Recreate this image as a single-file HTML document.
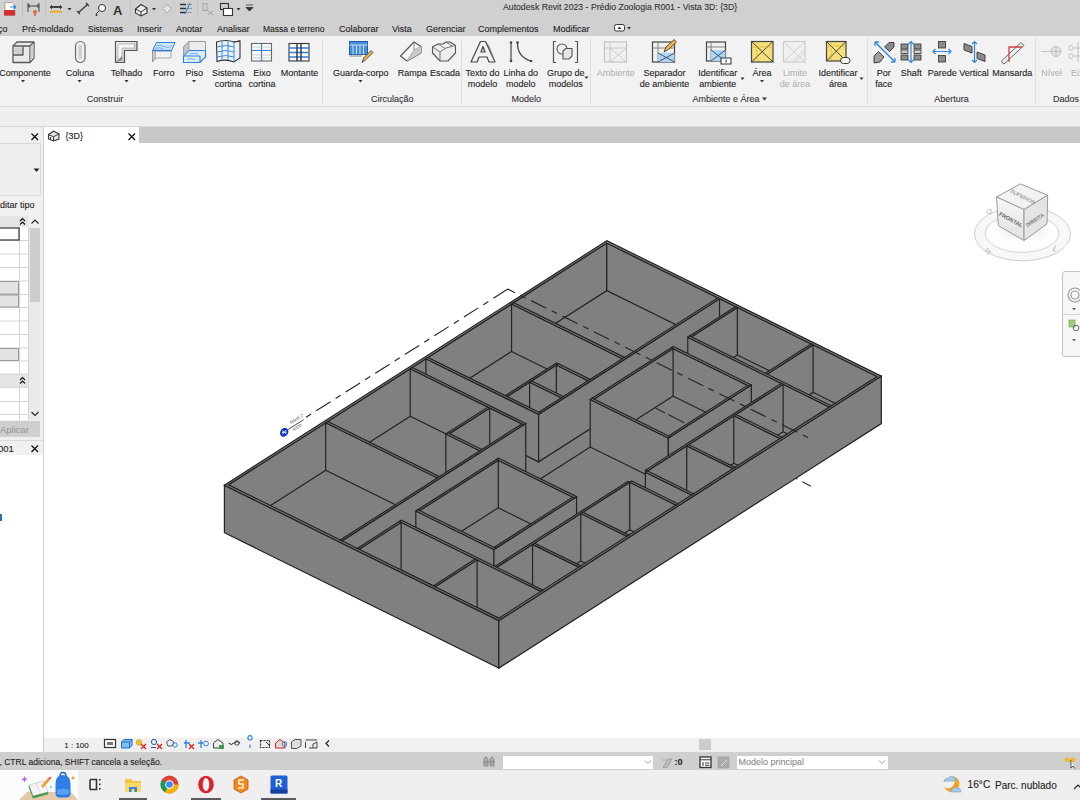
<!DOCTYPE html>
<html><head><meta charset="utf-8">
<style>
*{margin:0;padding:0;box-sizing:border-box}
html,body{width:1080px;height:800px;overflow:hidden;background:#fff;font-family:"Liberation Sans",sans-serif;color:#222}
.t,.l{-webkit-text-stroke:0.1px currentColor}
.a{position:absolute}
.t{position:absolute;white-space:nowrap;font-size:9px;line-height:11px;color:#222}
.c{text-align:center;transform:translateX(-50%)}
.l{position:absolute;white-space:nowrap;font-size:9px;line-height:11px;color:#222;text-align:center;transform:translateX(-50%)}
.dis{color:#b4b4b4}
svg{position:absolute;overflow:visible}
</style></head><body>
<!-- title bar -->
<div class="a" style="left:0;top:0;width:1080px;height:36px;background:#d0d0d0"></div>
<svg class="a" style="left:0;top:0" width="270" height="20">
<path d="M5,2.5 H12 L15,5.5 V15.5 H5 Z" fill="#fff" stroke="#999" stroke-width=".8"/>
<rect x="4" y="10" width="11" height="5.5" fill="#d32f2f"/>
<path d="M10,7 H15.5 M13.5,5 L15.5,7 L13.5,9" stroke="#2f86e0" stroke-width="1.2" fill="none"/>
<path d="M22.5,1 V18" stroke="#c2c2c2"/>
<path d="M28,3 V12 M39,3 V12 M28,6 H39 M30,4.5 L28,6 L30,7.5 M37,4.5 L39,6 L37,7.5" stroke="#444" stroke-width="1" fill="none"/>
<circle cx="35" cy="12" r="2" fill="#e2643a"/><path d="M35,14 V16" stroke="#e2643a" stroke-width="1.5"/>
<path d="M45.5,1 V18" stroke="#c2c2c2"/>
<rect x="50" y="6" width="12" height="2" fill="#444"/><path d="M50,7 L52,5 M50,7 L52,9 M62,7 L60,5 M62,7 L60,9" stroke="#444"/>
<rect x="50" y="10.5" width="12" height="2.5" fill="#e3b23c"/>
<path d="M67.5,8 h4 l-2,2.5z" fill="#333"/>
<path d="M78,13 L88,4 M77,11 L80,14 M86,3 L89,6" stroke="#333" stroke-width="1.2" fill="none"/>
<circle cx="102" cy="8" r="3.5" fill="#fff" stroke="#333" stroke-width="1"/>
<path d="M99,11 L96.5,13.5 V15" stroke="#333" stroke-width="1" fill="none"/><circle cx="96.5" cy="15" r="1" fill="#333"/>
<text x="113" y="15" font-family="Liberation Sans" font-weight="bold" font-size="13" fill="#333">A</text>
<path d="M130.5,1 V18" stroke="#c2c2c2"/>
<path d="M135.5,9 L141,4.5 L147,8 V13 L141,16 L135.5,13 Z" fill="#eee" stroke="#333" stroke-width="1.1"/>
<path d="M135.5,9 L141,12 L147,8 M141,12 V16" stroke="#333" stroke-width="1" fill="none"/>
<path d="M152,8 h4 l-2,2.5z" fill="#333"/>
<path d="M163,8.5 L167,4.5 L171.5,8.5 L167,13 Z" fill="#e5e5e5" stroke="#aaa" stroke-width="1"/>
<path d="M180,4.5 H186 M180,8.5 H186 M180,12.5 H186" stroke="#333" stroke-width="1.5"/>
<path d="M186.5,4.5 H192 M186.5,8.5 H192 M186.5,12.5 H192" stroke="#999" stroke-width="1"/>
<path d="M190,3 L185,14" stroke="#2f86e0" stroke-width="1.1"/>
<path d="M197.5,1 V18" stroke="#c2c2c2"/>
<g opacity=".35" stroke="#555" fill="none"><rect x="203" y="3.5" width="4" height="7"/><path d="M208,11 L213,15 M213,11 L208,15"/></g>
<rect x="220.5" y="3.5" width="8" height="6" fill="none" stroke="#333" stroke-width="1.1"/>
<rect x="223.5" y="8.5" width="9" height="7" fill="#fff" stroke="#333" stroke-width="1.1"/>
<path d="M236.5,8 h4 l-2,2.5z" fill="#333"/>
<path d="M246,5 H253 M246,7.5 h7 l-3.5,3.5z" fill="#333" stroke="#333" stroke-width=".8"/>
</svg>
<div class="t" style="left:503px;top:2px;font-size:8.7px;color:#333">Autodesk Revit 2023 - Prédio Zoologia R001 - Vista 3D: {3D}</div>
<svg class="a" style="left:612px;top:23px" width="22" height="10"><rect x="2.5" y="1.5" width="10" height="6.5" rx="2" fill="#fff" stroke="#333" stroke-width="1"/><path d="M5.5,6 L7.5,3.5 L9.5,6 Z" fill="#333"/><path d="M15,4 h4 l-2,2.5z" fill="#333"/></svg>

<!-- tabs -->
<div class="t" style="left:-2px;top:24px">ço</div>
<div class="t" style="left:22px;top:24px">Pré-moldado</div>
<div class="t" style="left:88px;top:24px;font-size:8.5px">Sistemas</div>
<div class="t" style="left:137px;top:24px">Inserir</div>
<div class="t" style="left:176px;top:24px">Anotar</div>
<div class="t" style="left:217px;top:24px">Analisar</div>
<div class="t" style="left:263px;top:24px;font-size:8.5px">Massa e terreno</div>
<div class="t" style="left:339px;top:24px">Colaborar</div>
<div class="t" style="left:392px;top:24px">Vista</div>
<div class="t" style="left:426px;top:24px">Gerenciar</div>
<div class="t" style="left:478px;top:24px">Complementos</div>
<div class="t" style="left:553px;top:24px">Modificar</div>
<!-- ribbon -->
<div class="a" style="left:0;top:36px;width:1080px;height:71px;background:#f2f2f2;border-bottom:1px solid #dcdcdc"></div>
<div class="a" style="left:322px;top:38px;width:1px;height:66px;background:#dedede"></div>
<div class="a" style="left:461px;top:38px;width:1px;height:66px;background:#dedede"></div>
<div class="a" style="left:590px;top:38px;width:1px;height:66px;background:#dedede"></div>
<div class="a" style="left:867px;top:38px;width:1px;height:66px;background:#dedede"></div>
<div class="a" style="left:1035px;top:38px;width:1px;height:66px;background:#dedede"></div>
<div class="l" style="left:25px;top:67.5px">Componente</div>
<div class="l" style="left:80px;top:67.5px">Coluna</div>
<div class="l" style="left:126.6px;top:67.5px">Telhado</div>
<div class="l" style="left:163.7px;top:67.5px">Forro</div>
<div class="l" style="left:194.2px;top:67.5px">Piso</div>
<div class="l" style="left:228.2px;top:67.5px">Sistema<br>cortina</div>
<div class="l" style="left:262px;top:67.5px">Eixo<br>cortina</div>
<div class="l" style="left:299.5px;top:67.5px">Montante</div>
<div class="l" style="left:360.8px;top:67.5px">Guarda-corpo</div>
<div class="l" style="left:412.2px;top:67.5px">Rampa</div>
<div class="l" style="left:445px;top:67.5px">Escada</div>
<div class="l" style="left:482.5px;top:67.5px">Texto do<br>modelo</div>
<div class="l" style="left:520.8px;top:67.5px">Linha do<br>modelo</div>
<div class="l" style="left:565.8px;top:67.5px">Grupo de<br>modelos</div>
<div class="l dis" style="left:615.8px;top:67.5px">Ambiente</div>
<div class="l" style="left:664.5px;top:67.5px">Separador<br>de ambiente</div>
<div class="l" style="left:717.7px;top:67.5px">Identificar<br>ambiente</div>
<div class="l" style="left:762px;top:67.5px">Área</div>
<div class="l dis" style="left:795px;top:67.5px">Limite<br>de área</div>
<div class="l" style="left:838px;top:67.5px">Identificar<br>área</div>
<div class="l" style="left:883.7px;top:67.5px">Por<br>face</div>
<div class="l" style="left:911.2px;top:67.5px">Shaft</div>
<div class="l" style="left:942.2px;top:67.5px">Parede</div>
<div class="l" style="left:974px;top:67.5px">Vertical</div>
<div class="l" style="left:1012.2px;top:67.5px">Mansarda</div>
<div class="l dis" style="left:1051.5px;top:67.5px">Nível</div>
<div class="t dis" style="left:1071px;top:67.5px">Eixo</div>
<div class="l" style="left:105px;top:93.5px;color:#333">Construir</div>
<div class="l" style="left:392.2px;top:93.5px;color:#333">Circulação</div>
<div class="l" style="left:526.3px;top:93.5px;color:#333">Modelo</div>
<div class="l" style="left:726px;top:93.5px;color:#333">Ambiente e Área</div>
<div class="l" style="left:951.5px;top:93.5px;color:#333">Abertura</div>
<div class="t" style="left:1053px;top:93.5px;color:#333">Dados</div>
<svg class="a" style="left:0;top:0" width="1080" height="110">
<g fill="#333">
<path d="M21,80h4l-2,2.5z"/><path d="M77.5,80h4l-2,2.5z"/><path d="M124.5,80h4l-2,2.5z"/><path d="M192,80h4l-2,2.5z"/>
<path d="M358.5,80h4l-2,2.5z"/><path d="M584.5,76.5h4l-2,2.5z"/><path d="M740.5,77.5h4l-2,2.5z"/><path d="M760,80h4l-2,2.5z"/>
<path d="M859.5,77.5h4l-2,2.5z"/><path d="M762,97.5h5l-2.5,3z"/><path d="M0,80h0z"/>
</g>
</svg>

<svg class="a" style="left:0;top:0" width="1080" height="70">
<defs>
<linearGradient id="gg" x1="0" y1="0" x2="1" y2="1"><stop offset="0" stop-color="#f4f4f4"/><stop offset="1" stop-color="#bdbdbd"/></linearGradient>
<linearGradient id="gb" x1="0" y1="0" x2="1" y2="0"><stop offset="0" stop-color="#3d8ee6"/><stop offset=".5" stop-color="#bfe0ff"/><stop offset="1" stop-color="#3d8ee6"/></linearGradient>
</defs>
<!-- Componente -->
<g stroke="#5a5a5a" stroke-width="1.3" stroke-linejoin="round">
<path d="M13,46 L17,42 H34 V58 L30,62.5 H13 Z" fill="#e9e9e9"/>
<path d="M30,62.5 V46 H13 M30,46 L34,42" fill="none"/>
<path d="M14.5,47.5 H23 V54 H14.5 Z" fill="#cfcfcf" stroke="none"/>
<path d="M23,46 V55 H13" fill="none"/>
<path d="M30.5,47 L33.5,43.5 V57.5 L30.5,61" fill="#cfcfcf" stroke="none"/>
</g>
<!-- Coluna -->
<rect x="75.5" y="41.5" width="9.5" height="21" rx="4.7" fill="#f0f0f0" stroke="#6a6a6a" stroke-width="1.2"/>
<rect x="78.5" y="45" width="3.5" height="14" fill="#d0d0d0"/>
<!-- Telhado -->
<path d="M115.5,41.5 H137 V50.5 H124.5 V62.5 H115.5 Z" fill="url(#gg)" stroke="#555" stroke-width="1.2"/>
<path d="M118,44 H134.5 V48 H122 V60 H118 Z" fill="#f7f7f7" stroke="#999" stroke-width=".6"/>
<path d="M115.5,62.5 L122,56 V60 Z" fill="#888"/>
<!-- Forro -->
<path d="M152.5,50.5 V62 L156,58 V51" fill="#c8c8c8" stroke="#888" stroke-width=".8"/>
<path d="M156,51 H171 V58 H156" fill="#f2f2f2" stroke="#999" stroke-width=".8"/>
<path d="M152.5,50.5 L156.5,42.5 H175 L171.5,50.5 Z" fill="#cfe6fb" stroke="#2f7fd8" stroke-width="1"/>
<path d="M156,46 Q160,44 164,46.5 T172,45.5 M155,48.5 Q159,47 163,48.5" stroke="#6fb0ef" stroke-width="1" fill="none"/>
<path d="M152.5,50.5 H171.5" stroke="#2f7fd8" stroke-width="1.4"/>
<!-- Piso -->
<path d="M183.5,47 L189,41.5 H205.5 V55 L200,60 H183.5 Z" fill="#ececec" stroke="#999" stroke-width="1"/>
<path d="M183.5,47 V56 L189,50.5 V41.5 Z" fill="#c4c4c4" stroke="#999" stroke-width=".8"/>
<path d="M183.5,56 L189,50.5 H205.5 L200,56 Z" fill="#cfe6fb" stroke="#2f7fd8" stroke-width="1"/>
<path d="M183.5,56 V62.5 H200 L205.5,57 V50.5 M200,56 V62.5 M183.5,56 H200" fill="#dbeefc" stroke="#2f7fd8" stroke-width="1.1"/>
<path d="M187,59.5 Q191,57.5 195,59.5 M190,54 Q194,52.5 198,54" stroke="#6fb0ef" stroke-width="1" fill="none"/>
<!-- Sistema cortina -->
<path d="M216.5,42 Q226,39 234,42 L240,41 V58 L234,62 Q226,58.5 217,61.5 Z" fill="#eaf3fd" stroke="#333" stroke-width="1.1"/>
<path d="M234,42 V62 M222,41 V60.5 M228,40.5 V60 M216.8,47 Q226,44 234,47 M217,52 Q226,49 234,52 M217,57 Q226,54 234,57" fill="none" stroke="#2f7fd8" stroke-width=".9"/>
<path d="M234,42 L240,41" stroke="#333" fill="none"/>
<!-- Eixo cortina -->
<rect x="251.5" y="43.5" width="20" height="17.5" fill="#fafafa" stroke="#666" stroke-width="1.1"/>
<path d="M261.5,43.5 V61 M251.5,50.5 H271.5" stroke="#2f7fd8" stroke-width="1.2"/>
<path d="M251.5,47 H271.5 M251.5,55 H271.5 M251.5,58 H271.5" stroke="#bbb" stroke-width=".7"/>
<!-- Montante -->
<rect x="289" y="43.5" width="20" height="17.5" fill="#fafafa" stroke="#3a3a3a" stroke-width="1.1"/>
<path d="M289,48 H309 M289,52.5 H309 M289,57 H309" stroke="#2f7fd8" stroke-width="1.3"/>
<path d="M297,43.5 V61 M301,43.5 V61" stroke="#333" stroke-width="1.4"/>
<!-- Guarda-corpo -->
<rect x="349.5" y="41.5" width="18" height="13" fill="#4a90d9" stroke="#1d5fb0" stroke-width="1"/>
<path d="M349.5,45 H367.5 M353,45 V54.5 M356.5,45 V54.5 M360,45 V54.5 M363.5,45 V54.5" stroke="#cfe5fb" stroke-width=".9"/>
<path d="M349.5,56 H362" stroke="#888" stroke-width="1"/>
<path d="M362,62.5 L364,57.5 L371,50.5 L373,52.5 L366,59.5 Z" fill="#f3b340" stroke="#444" stroke-width=".9"/>
<!-- Rampa -->
<path d="M400.5,56 L414,42 L421,46.5 V53 L407,61 Z" fill="#f7f7f7" stroke="#555" stroke-width="1.1" stroke-linejoin="round"/>
<path d="M407,61 L414,50 L421,46.5 M414,42 V50" fill="none" stroke="#777" stroke-width=".8"/>
<path d="M414,50 L421,46.5 V53 L407,61 Z" fill="#c9c9c9"/>
<!-- Escada -->
<path d="M432.5,53 V47 L438,44 H443 L446,42 H450 L455.5,45.5 V53 L448,61 H440 Z" fill="#eee" stroke="#555" stroke-width="1.1" stroke-linejoin="round"/>
<path d="M432.5,47 L440,52 V61 M440,52 L446,48 M438,44 L445,48.5 M446,42 L452,46 M446,48 L455.5,45.5" fill="none" stroke="#666" stroke-width=".9"/>
<!-- Texto do modelo -->
<path d="M471,62 L480.5,41.5 H485.5 L495,62 H489 L487,57 H479 L477,62 Z M481,52 H485 L483,46.5 Z" fill="#f2f2f2" stroke="#444" stroke-width="1.2" stroke-linejoin="round" fill-rule="evenodd"/>
<path d="M485.5,41.5 L489,46 L495,62" fill="none" stroke="#777" stroke-width=".8"/>
<!-- Linha do modelo -->
<path d="M511,42 V61" stroke="#444" stroke-width="1.2"/>
<circle cx="511" cy="42.5" r="1.3" fill="#444"/><circle cx="511" cy="61" r="1.3" fill="#444"/>
<path d="M517.5,42 Q517,57 531,61" fill="none" stroke="#444" stroke-width="1.2"/>
<circle cx="517.5" cy="42.5" r="1.3" fill="#444"/><circle cx="531" cy="61" r="1.3" fill="#444"/>
<!-- Grupo de modelos -->
<path d="M556,41.5 H553.5 V62.5 H556 M575,41.5 H577.5 V62.5 H575" fill="none" stroke="#555" stroke-width="1.2"/>
<circle cx="562" cy="49" r="5" fill="#f0f0f0" stroke="#555" stroke-width="1.1"/>
<path d="M563,51 L566,48.5 H572 V56 L569,59 H563 Z" fill="#e6e6e6" stroke="#555" stroke-width="1.1"/>
<!-- Ambiente disabled -->
<g opacity=".35">
<rect x="604.5" y="42" width="22" height="20" fill="#eee" stroke="#666" stroke-width="1.1"/>
<path d="M610,42 V62 M604.5,48 H626.5 M610,48 L626.5,62 M626.5,48 L610,62" stroke="#777" fill="none" stroke-width=".9"/>
</g>
<!-- Separador -->
<rect x="652.5" y="42" width="22" height="20" fill="#f0f0f0" stroke="#444" stroke-width="1.2"/>
<path d="M658,42 V62 M652.5,48 H674.5" stroke="#777" stroke-width=".9"/>
<path d="M658,53 H674.5 V62 H658 Z" fill="#a9d6f5"/>
<path d="M658,53 L674.5,62 M674.5,53 L658,62" stroke="#445" stroke-width=".9"/>
<path d="M664,52 L666,47 L674,39.5 L676.5,42 L668.5,49.5 Z" fill="#f3b340" stroke="#444" stroke-width=".9"/>
<!-- Identificar ambiente -->
<rect x="706.5" y="42" width="19" height="19" fill="#f0f0f0" stroke="#444" stroke-width="1.2"/>
<path d="M711,42 V61 M706.5,47 H725.5" stroke="#777" stroke-width=".9"/>
<path d="M711,50 H725.5 V61 H711 Z" fill="#a9d6f5"/>
<path d="M711,50 L725.5,61 M725.5,50 L711,61" stroke="#445" stroke-width=".9"/>
<rect x="721" y="58" width="10" height="6" fill="#fff" stroke="#333" stroke-width="1"/>
<path d="M726,59.5 V62.5" stroke="#333" stroke-width="1"/>
<!-- Area -->
<rect x="751.5" y="41.5" width="21.5" height="20.5" fill="#f7e07a" stroke="#444" stroke-width="1.2"/>
<path d="M751.5,41.5 L773,62 M773,41.5 L751.5,62" stroke="#444" stroke-width="1"/>
<path d="M757,41.5 V62 M751.5,47 H773" stroke="#c9a928" stroke-width=".6"/>
<!-- Limite disabled -->
<g opacity=".3">
<rect x="783.5" y="41.5" width="21.5" height="20.5" fill="#eee" stroke="#777" stroke-width="1.1"/>
<path d="M783.5,41.5 L805,62 M805,41.5 L783.5,62 M792,62 L805,49 M795,62 L805,52" stroke="#777" stroke-width=".9"/>
</g>
<!-- Identificar area -->
<rect x="826.5" y="41.5" width="19.5" height="19.5" fill="#f7e07a" stroke="#444" stroke-width="1.2"/>
<path d="M826.5,41.5 L846,61 M846,41.5 L826.5,61" stroke="#444" stroke-width="1"/>
<path d="M831,41.5 V61 M826.5,46 H846" stroke="#c9a928" stroke-width=".6"/>
<rect x="840.5" y="57.5" width="9.5" height="6" rx="3" fill="#fff" stroke="#333" stroke-width="1"/>
<!-- Por face -->
<path d="M876,43 L894,61" stroke="#2f86e0" stroke-width="1.4"/>
<path d="M875,42 V46 M875,42 H879 M895,62 V58 M895,62 H891" stroke="#2f86e0" stroke-width="1.3" fill="none"/>
<path d="M884.5,47 L889,42.5 H894 V47 L889.5,51.5 Z" fill="#8a8a8a" stroke="#333" stroke-width=".9"/>
<path d="M874,63 V56 L878.5,51.5 L884,57 L880,62 Z" fill="#a0a0a0" stroke="#333" stroke-width=".9"/>
<!-- Shaft -->
<g fill="#8c8c8c" stroke="#333" stroke-width=".8">
<rect x="901" y="44" width="7" height="5"/><rect x="914" y="44" width="7" height="5"/>
<rect x="901" y="55" width="7" height="5"/><rect x="914" y="55" width="7" height="5"/>
<rect x="901" y="50" width="7" height="3.5" fill="#ccc"/><rect x="914" y="50" width="7" height="3.5" fill="#ccc"/>
</g>
<path d="M911,41.5 V62.5 M908.5,44 L911,41.5 L913.5,44 M908.5,60 L911,62.5 L913.5,60" stroke="#2f86e0" stroke-width="1.2" fill="none"/>
<!-- Parede -->
<rect x="938.5" y="41.5" width="7" height="6.5" fill="#8c8c8c" stroke="#333" stroke-width=".8"/>
<rect x="938.5" y="55.5" width="7" height="6.5" fill="#8c8c8c" stroke="#333" stroke-width=".8"/>
<path d="M933,51.5 H951 M935.5,49 L933,51.5 L935.5,54 M948.5,49 L951,51.5 L948.5,54" stroke="#2f86e0" stroke-width="1.2" fill="none"/>
<!-- Vertical -->
<path d="M964,43.5 L972,46.5 V53 L964,50 Z" fill="#8c8c8c" stroke="#333" stroke-width=".9"/>
<path d="M977,52 L985,55 V61.5 L977,58.5 Z" fill="#8c8c8c" stroke="#333" stroke-width=".9"/>
<path d="M974.5,41.5 V62.5 M972,44 L974.5,41.5 L977,44 M972,60 L974.5,62.5 L977,60" stroke="#2f86e0" stroke-width="1.2" fill="none"/>
<!-- Mansarda -->
<path d="M1001,61.5 L1021,42.5 L1024,45.5 L1004,64 Z" fill="#eee" stroke="#555" stroke-width=".9"/>
<path d="M1009,62 V47 H1022" fill="none" stroke="#d43c3c" stroke-width="1.3"/>
<!-- Nivel disabled -->
<g opacity=".35" stroke="#666" fill="none">
<path d="M1041,51.5 H1050"/><circle cx="1056" cy="51.5" r="5" fill="#ccc"/>
<path d="M1051,51.5 H1061 M1056,46.5 V56.5"/>
<circle cx="1071" cy="48" r="2.3"/><circle cx="1071" cy="56" r="2.3"/><path d="M1073,48 H1080 M1073,56 H1080 M1078,42 V62"/>
</g>
</svg>

<!-- options bar -->
<div class="a" style="left:0;top:107px;width:1080px;height:20px;background:#efefef"></div>
<!-- view tab row -->
<div class="a" style="left:0;top:127px;width:1080px;height:16px;background:#c8c8c8"></div>
<!-- drawing area -->
<div class="a" style="left:44px;top:143px;width:1036px;height:595px;background:#fff"></div>
<!-- options bar border -->
<div class="a" style="left:0;top:126px;width:1080px;height:1px;background:#d6d6d6"></div>
<!-- view tab -->
<div class="a" style="left:44px;top:127px;width:95px;height:16px;background:#fff"></div>
<svg class="a" style="left:47px;top:130px" width="14" height="12">
<path d="M1.5,4.5 L6.5,1.2 L12,3.8 V9 L6.5,11 L1.5,9 Z" fill="#e8e8e8" stroke="#333" stroke-width="1.1"/>
<path d="M1.5,4.5 L6.5,6.8 L12,3.8 M6.5,6.8 V11 M3.5,7 V9.5" stroke="#333" stroke-width="1" fill="none"/>
</svg>
<div class="t" style="left:65.5px;top:130.5px;color:#222">{3D}</div>
<svg class="a" style="left:127px;top:132px" width="10" height="10"><path d="M1.5,1.5 L8,8 M8,1.5 L1.5,8" stroke="#111" stroke-width="1.3"/></svg>
<!-- left panel -->
<div class="a" style="left:0;top:127px;width:43px;height:328px;background:#f0f0f0"></div>
<svg class="a" style="left:30px;top:132px" width="10" height="10"><path d="M1.5,1.5 L8,8 M8,1.5 L1.5,8" stroke="#111" stroke-width="1.3"/></svg>
<div class="a" style="left:-1px;top:143px;width:42px;height:53px;background:#efefef;border:1px solid #d9d9d9"></div>
<svg class="a" style="left:33px;top:168px" width="8" height="5"><path d="M0.5,0.5 h6 l-3,3.5z" fill="#222"/></svg>
<div class="t" style="left:0px;top:200px;color:#222">ditar tipo</div>
<div class="a" style="left:0;top:215.5px;width:28px;height:11.5px;background:#e4e4e4"></div>
<div class="a" style="left:0;top:374px;width:28px;height:13px;background:#e4e4e4"></div>
<svg class="a" style="left:19px;top:217px" width="8" height="9"><path d="M1,4 L3.5,1.5 L6,4 M1,7.5 L3.5,5 L6,7.5" stroke="#111" stroke-width="1.1" fill="none"/></svg>
<svg class="a" style="left:19px;top:376px" width="8" height="9"><path d="M1,4 L3.5,1.5 L6,4 M1,7.5 L3.5,5 L6,7.5" stroke="#111" stroke-width="1.1" fill="none"/></svg>
<div class="a" style="left:0;top:227px;width:28px;height:147px;background:#fff"></div>
<div class="a" style="left:0;top:387.4px;width:28px;height:33px;background:#fff"></div>
<svg class="a" style="left:0;top:215px" width="30" height="210">
<g stroke="#d4d4d4" stroke-width="1">
<path d="M0,25.5H28 M0,39H28 M0,52.5H28 M0,66H28 M0,79.5H28 M0,92.5H28 M0,106H28 M0,119.5H28 M0,133H28 M0,146H28 M0,159H28 M0,172.4H28 M0,186.5H28 M0,199.4H28"/>
<path d="M19.5,12V159 M19.5,172V205 M28.5,12V205"/>
</g>
<rect x="-1" y="13" width="20" height="12" fill="#fff" stroke="#333" stroke-width="1.2"/>
<rect x="-1" y="66.5" width="19.5" height="12.5" fill="#e3e3e3" stroke="#9a9a9a" stroke-width="1"/>
<rect x="-1" y="80" width="19.5" height="12" fill="#e3e3e3" stroke="#9a9a9a" stroke-width="1"/>
<rect x="-1" y="133.5" width="19.5" height="12" fill="#e3e3e3" stroke="#9a9a9a" stroke-width="1"/>
</svg>
<div class="a" style="left:29px;top:227px;width:11px;height:193px;background:#e9e9e9"></div>
<div class="a" style="left:29.5px;top:228px;width:10.5px;height:74px;background:#cdcdcd"></div>
<svg class="a" style="left:30px;top:218px" width="10" height="8"><path d="M1.5,5.5 L5,2 L8.5,5.5" stroke="#222" stroke-width="1.1" fill="none"/></svg>
<svg class="a" style="left:30px;top:410px" width="10" height="8"><path d="M1.5,2 L5,5.5 L8.5,2" stroke="#222" stroke-width="1.1" fill="none"/></svg>
<div class="a" style="left:0;top:421px;width:40px;height:16px;background:#cfcfcf"></div>
<div class="t" style="left:0px;top:424px;color:#9a9a9a;font-size:9.5px">Aplicar</div>
<div class="a" style="left:0;top:440px;width:43px;height:1px;background:#d8d8d8"></div>
<div class="a" style="left:0;top:441px;width:43px;height:14px;background:#f0f0f0"></div>
<div class="t" style="left:-2px;top:443px;color:#222;font-size:9.5px">001</div>
<svg class="a" style="left:30px;top:444px" width="10" height="10"><path d="M1.5,1.5 L8,8 M8,1.5 L1.5,8" stroke="#111" stroke-width="1.3"/></svg>
<div class="a" style="left:0;top:455px;width:43px;height:297px;background:#fff"></div>
<div class="a" style="left:0;top:514px;width:2px;height:7px;background:#2f6fb0"></div>
<div class="a" style="left:42.5px;top:127px;width:1.5px;height:625px;background:#d0d0d0"></div>


<svg class="a" style="left:0;top:0" width="1080" height="800" viewBox="0 0 1080 800"><polygon points="224.40,532.70 498.80,668.10 881.30,423.60 606.90,288.20" fill="#808080" stroke="none" stroke-width="1.2" stroke-linejoin="miter" /><polygon points="228.60,484.85 606.82,243.08 606.82,290.58 228.60,532.35" fill="#808080" stroke="#232323" stroke-width="1.2" stroke-linejoin="miter" /><polygon points="606.82,243.08 877.10,376.45 877.10,423.95 606.82,290.58" fill="#808080" stroke="#232323" stroke-width="1.2" stroke-linejoin="miter" /><polygon points="511.57,303.97 622.50,358.70 622.50,406.20 511.57,351.47" fill="#808080" stroke="#808080" stroke-width="0.6" stroke-linejoin="miter" /><path d="M511.57 303.97L622.50 358.70M511.57 351.47L622.50 406.20M511.57 303.97L511.57 351.47M622.50 358.70L622.50 406.20" fill="none" stroke="#232323" stroke-width="1.2" stroke-linecap="square"/><polygon points="622.50,358.70 624.49,357.43 624.49,404.93 622.50,406.20" fill="#808080" stroke="#808080" stroke-width="0.6" stroke-linejoin="miter" /><path d="M622.50 358.70L624.49 357.43M622.50 406.20L624.49 404.93M622.50 358.70L622.50 406.20M624.49 357.43L624.49 404.93" fill="none" stroke="#232323" stroke-width="1.2" stroke-linecap="square"/><polygon points="505.33,395.68 507.12,396.56 507.12,444.06 505.33,443.18" fill="#808080" stroke="#808080" stroke-width="0.6" stroke-linejoin="miter" /><path d="M505.33 395.68L507.12 396.56M505.33 443.18L507.12 444.06M505.33 395.68L505.33 443.18M507.12 396.56L507.12 444.06" fill="none" stroke="#232323" stroke-width="1.2" stroke-linecap="square"/><polygon points="507.12,396.56 558.37,363.80 558.37,411.30 507.12,444.06" fill="#808080" stroke="#808080" stroke-width="0.6" stroke-linejoin="miter" /><path d="M507.12 396.56L558.37 363.80M507.12 444.06L558.37 411.30M507.12 396.56L507.12 444.06M558.37 363.80L558.37 411.30" fill="none" stroke="#232323" stroke-width="1.2" stroke-linecap="square"/><polygon points="556.38,365.07 588.07,380.71 588.07,428.21 556.38,412.57" fill="#808080" stroke="#808080" stroke-width="0.6" stroke-linejoin="miter" /><path d="M556.38 365.07L588.07 380.71M556.38 412.57L588.07 428.21M556.38 365.07L556.38 412.57M588.07 380.71L588.07 428.21" fill="none" stroke="#232323" stroke-width="1.2" stroke-linecap="square"/><polygon points="588.07,380.71 590.06,379.43 590.06,426.93 588.07,428.21" fill="#808080" stroke="#808080" stroke-width="0.6" stroke-linejoin="miter" /><path d="M588.07 380.71L590.06 379.43M588.07 428.21L590.06 426.93M588.07 380.71L588.07 428.21M590.06 379.43L590.06 426.93" fill="none" stroke="#232323" stroke-width="1.2" stroke-linecap="square"/><polygon points="529.61,382.18 561.30,397.82 561.30,445.32 529.61,429.68" fill="#808080" stroke="#808080" stroke-width="0.6" stroke-linejoin="miter" /><path d="M529.61 382.18L561.30 397.82M529.61 429.68L561.30 445.32M529.61 382.18L529.61 429.68M561.30 397.82L561.30 445.32" fill="none" stroke="#232323" stroke-width="1.2" stroke-linecap="square"/><polygon points="561.30,397.82 563.29,396.55 563.29,444.05 561.30,445.32" fill="#808080" stroke="#808080" stroke-width="0.6" stroke-linejoin="miter" /><path d="M561.30 397.82L563.29 396.55M561.30 445.32L563.29 444.05M561.30 397.82L561.30 445.32M563.29 396.55L563.29 444.05" fill="none" stroke="#232323" stroke-width="1.2" stroke-linecap="square"/><polygon points="538.81,412.20 540.59,413.08 540.59,460.58 538.81,459.70" fill="#808080" stroke="#808080" stroke-width="0.6" stroke-linejoin="miter" /><path d="M538.81 412.20L540.59 413.08M538.81 459.70L540.59 460.58M538.81 412.20L538.81 459.70M540.59 413.08L540.59 460.58" fill="none" stroke="#232323" stroke-width="1.2" stroke-linecap="square"/><polygon points="540.59,413.08 719.53,298.70 719.53,346.20 540.59,460.58" fill="#808080" stroke="#808080" stroke-width="0.6" stroke-linejoin="miter" /><path d="M540.59 413.08L719.53 298.70M540.59 460.58L719.53 346.20M719.53 298.70L719.53 346.20" fill="none" stroke="#232323" stroke-width="1.2" stroke-linecap="square"/><polygon points="425.89,358.73 538.60,414.35 538.60,461.85 425.89,406.23" fill="#808080" stroke="#808080" stroke-width="0.6" stroke-linejoin="miter" /><path d="M425.89 358.73L538.60 414.35M425.89 406.23L538.60 461.85M425.89 358.73L425.89 406.23M538.60 414.35L538.60 461.85" fill="none" stroke="#232323" stroke-width="1.2" stroke-linecap="square"/><polygon points="538.60,414.35 540.59,413.08 540.59,460.58 538.60,461.85" fill="#808080" stroke="#808080" stroke-width="0.6" stroke-linejoin="miter" /><path d="M538.60 414.35L540.59 413.08M538.60 461.85L540.59 460.58M538.60 414.35L538.60 461.85" fill="none" stroke="#232323" stroke-width="1.2" stroke-linecap="square"/><polygon points="410.21,368.76 523.74,424.78 523.74,472.28 410.21,416.26" fill="#808080" stroke="#808080" stroke-width="0.6" stroke-linejoin="miter" /><path d="M410.21 368.76L523.74 424.78M410.21 416.26L523.74 472.28M410.21 368.76L410.21 416.26M523.74 424.78L523.74 472.28" fill="none" stroke="#232323" stroke-width="1.2" stroke-linecap="square"/><polygon points="523.74,424.78 525.73,423.51 525.73,471.01 523.74,472.28" fill="#808080" stroke="#808080" stroke-width="0.6" stroke-linejoin="miter" /><path d="M523.74 424.78L525.73 423.51M523.74 472.28L525.73 471.01M525.73 423.51L525.73 471.01" fill="none" stroke="#232323" stroke-width="1.2" stroke-linecap="square"/><polygon points="447.85,432.73 449.63,433.61 449.63,481.11 447.85,480.23" fill="#808080" stroke="#808080" stroke-width="0.6" stroke-linejoin="miter" /><path d="M447.85 432.73L449.63 433.61M447.85 480.23L449.63 481.11M447.85 432.73L447.85 480.23M449.63 433.61L449.63 481.11" fill="none" stroke="#232323" stroke-width="1.2" stroke-linecap="square"/><polygon points="449.63,433.61 489.72,407.99 489.72,455.49 449.63,481.11" fill="#808080" stroke="#808080" stroke-width="0.6" stroke-linejoin="miter" /><path d="M449.63 433.61L489.72 407.99M449.63 481.11L489.72 455.49M449.63 433.61L449.63 481.11M489.72 407.99L489.72 455.49" fill="none" stroke="#232323" stroke-width="1.2" stroke-linecap="square"/><polygon points="445.86,434.00 479.89,450.79 479.89,498.29 445.86,481.50" fill="#808080" stroke="#808080" stroke-width="0.6" stroke-linejoin="miter" /><path d="M445.86 434.00L479.89 450.79M445.86 481.50L479.89 498.29M445.86 434.00L445.86 481.50M479.89 450.79L479.89 498.29" fill="none" stroke="#232323" stroke-width="1.2" stroke-linecap="square"/><polygon points="479.89,450.79 481.87,449.52 481.87,497.02 479.89,498.29" fill="#808080" stroke="#808080" stroke-width="0.6" stroke-linejoin="miter" /><path d="M479.89 450.79L481.87 449.52M479.89 498.29L481.87 497.02M479.89 450.79L479.89 498.29M481.87 449.52L481.87 497.02" fill="none" stroke="#232323" stroke-width="1.2" stroke-linecap="square"/><polygon points="325.68,422.79 437.43,477.93 437.43,525.43 325.68,470.29" fill="#808080" stroke="#808080" stroke-width="0.6" stroke-linejoin="miter" /><path d="M325.68 422.79L437.43 477.93M325.68 470.29L437.43 525.43M325.68 422.79L325.68 470.29M437.43 477.93L437.43 525.43" fill="none" stroke="#232323" stroke-width="1.2" stroke-linecap="square"/><polygon points="437.43,477.93 439.42,476.66 439.42,524.16 437.43,525.43" fill="#808080" stroke="#808080" stroke-width="0.6" stroke-linejoin="miter" /><path d="M437.43 477.93L439.42 476.66M437.43 525.43L439.42 524.16M437.43 477.93L437.43 525.43M439.42 476.66L439.42 524.16" fill="none" stroke="#232323" stroke-width="1.2" stroke-linecap="square"/><polygon points="340.35,539.99 342.13,540.87 342.13,588.37 340.35,587.49" fill="#808080" stroke="#808080" stroke-width="0.6" stroke-linejoin="miter" /><path d="M340.35 539.99L342.13 540.87M340.35 587.49L342.13 588.37M340.35 539.99L340.35 587.49M342.13 540.87L342.13 588.37" fill="none" stroke="#232323" stroke-width="1.2" stroke-linecap="square"/><polygon points="342.13,540.87 523.74,424.78 523.74,472.28 342.13,588.37" fill="#808080" stroke="#808080" stroke-width="0.6" stroke-linejoin="miter" /><path d="M342.13 540.87L523.74 424.78M342.13 588.37L523.74 472.28M342.13 540.87L342.13 588.37" fill="none" stroke="#232323" stroke-width="1.2" stroke-linecap="square"/><polygon points="689.75,335.91 691.54,336.79 691.54,384.29 689.75,383.41" fill="#808080" stroke="#808080" stroke-width="0.6" stroke-linejoin="miter" /><path d="M689.75 335.91L691.54 336.79M689.75 383.41L691.54 384.29M689.75 335.91L689.75 383.41M691.54 336.79L691.54 384.29" fill="none" stroke="#232323" stroke-width="1.2" stroke-linecap="square"/><polygon points="691.54,336.79 737.36,307.50 737.36,355.00 691.54,384.29" fill="#808080" stroke="#808080" stroke-width="0.6" stroke-linejoin="miter" /><path d="M691.54 336.79L737.36 307.50M691.54 384.29L737.36 355.00M691.54 336.79L691.54 384.29M737.36 307.50L737.36 355.00" fill="none" stroke="#232323" stroke-width="1.2" stroke-linecap="square"/><polygon points="765.49,373.28 767.27,374.16 767.27,421.66 765.49,420.78" fill="#808080" stroke="#808080" stroke-width="0.6" stroke-linejoin="miter" /><path d="M765.49 373.28L767.27 374.16M765.49 420.78L767.27 421.66M765.49 373.28L765.49 420.78M767.27 374.16L767.27 421.66" fill="none" stroke="#232323" stroke-width="1.2" stroke-linecap="square"/><polygon points="767.27,374.16 813.10,344.87 813.10,392.37 767.27,421.66" fill="#808080" stroke="#808080" stroke-width="0.6" stroke-linejoin="miter" /><path d="M767.27 374.16L813.10 344.87M767.27 421.66L813.10 392.37M767.27 374.16L767.27 421.66M813.10 344.87L813.10 392.37" fill="none" stroke="#232323" stroke-width="1.2" stroke-linecap="square"/><polygon points="687.77,337.18 829.29,407.02 829.29,454.52 687.77,384.68" fill="#808080" stroke="#808080" stroke-width="0.6" stroke-linejoin="miter" /><path d="M687.77 337.18L829.29 407.02M687.77 384.68L829.29 454.52M687.77 337.18L687.77 384.68M829.29 407.02L829.29 454.52" fill="none" stroke="#232323" stroke-width="1.2" stroke-linecap="square"/><polygon points="829.29,407.02 831.28,405.74 831.28,453.24 829.29,454.52" fill="#808080" stroke="#808080" stroke-width="0.6" stroke-linejoin="miter" /><path d="M829.29 407.02L831.28 405.74M829.29 454.52L831.28 453.24M829.29 407.02L829.29 454.52M831.28 405.74L831.28 453.24" fill="none" stroke="#232323" stroke-width="1.2" stroke-linecap="square"/><polygon points="671.32,347.70 749.38,386.22 749.38,433.72 671.32,395.20" fill="#808080" stroke="#808080" stroke-width="0.6" stroke-linejoin="miter" /><path d="M671.32 347.70L749.38 386.22M671.32 395.20L749.38 433.72M671.32 347.70L671.32 395.20M749.38 386.22L749.38 433.72" fill="none" stroke="#232323" stroke-width="1.2" stroke-linecap="square"/><polygon points="749.38,386.22 751.37,384.95 751.37,432.45 749.38,433.72" fill="#808080" stroke="#808080" stroke-width="0.6" stroke-linejoin="miter" /><path d="M749.38 386.22L751.37 384.95M749.38 433.72L751.37 432.45M751.37 384.95L751.37 432.45" fill="none" stroke="#232323" stroke-width="1.2" stroke-linecap="square"/><polygon points="592.22,398.26 594.00,399.14 594.00,446.64 592.22,445.76" fill="#808080" stroke="#808080" stroke-width="0.6" stroke-linejoin="miter" /><path d="M592.22 398.26L594.00 399.14M592.22 445.76L594.00 446.64M592.22 398.26L592.22 445.76M594.00 399.14L594.00 446.64" fill="none" stroke="#232323" stroke-width="1.2" stroke-linecap="square"/><polygon points="594.00,399.14 673.10,348.58 673.10,396.08 594.00,446.64" fill="#808080" stroke="#808080" stroke-width="0.6" stroke-linejoin="miter" /><path d="M594.00 399.14L673.10 348.58M594.00 446.64L673.10 396.08M594.00 399.14L594.00 446.64M673.10 348.58L673.10 396.08" fill="none" stroke="#232323" stroke-width="1.2" stroke-linecap="square"/><polygon points="668.50,435.90 670.28,436.78 670.28,484.28 668.50,483.40" fill="#808080" stroke="#808080" stroke-width="0.6" stroke-linejoin="miter" /><path d="M668.50 435.90L670.28 436.78M668.50 483.40L670.28 484.28M668.50 435.90L668.50 483.40M670.28 436.78L670.28 484.28" fill="none" stroke="#232323" stroke-width="1.2" stroke-linecap="square"/><polygon points="670.28,436.78 749.38,386.22 749.38,433.72 670.28,484.28" fill="#808080" stroke="#808080" stroke-width="0.6" stroke-linejoin="miter" /><path d="M670.28 436.78L749.38 386.22M670.28 484.28L749.38 433.72" fill="none" stroke="#232323" stroke-width="1.2" stroke-linecap="square"/><polygon points="590.23,399.53 668.29,438.05 668.29,485.55 590.23,447.03" fill="#808080" stroke="#808080" stroke-width="0.6" stroke-linejoin="miter" /><path d="M590.23 399.53L668.29 438.05M590.23 447.03L668.29 485.55M590.23 399.53L590.23 447.03M668.29 438.05L668.29 485.55" fill="none" stroke="#232323" stroke-width="1.2" stroke-linecap="square"/><polygon points="668.29,438.05 670.28,436.78 670.28,484.28 668.29,485.55" fill="#808080" stroke="#808080" stroke-width="0.6" stroke-linejoin="miter" /><path d="M668.29 438.05L670.28 436.78M668.29 485.55L670.28 484.28M668.29 438.05L668.29 485.55" fill="none" stroke="#232323" stroke-width="1.2" stroke-linecap="square"/><polygon points="496.52,459.43 574.58,497.95 574.58,545.45 496.52,506.93" fill="#808080" stroke="#808080" stroke-width="0.6" stroke-linejoin="miter" /><path d="M496.52 459.43L574.58 497.95M496.52 506.93L574.58 545.45M496.52 459.43L496.52 506.93M574.58 497.95L574.58 545.45" fill="none" stroke="#232323" stroke-width="1.2" stroke-linecap="square"/><polygon points="574.58,497.95 576.57,496.68 576.57,544.18 574.58,545.45" fill="#808080" stroke="#808080" stroke-width="0.6" stroke-linejoin="miter" /><path d="M574.58 497.95L576.57 496.68M574.58 545.45L576.57 544.18M576.57 496.68L576.57 544.18" fill="none" stroke="#232323" stroke-width="1.2" stroke-linecap="square"/><polygon points="417.80,509.75 419.58,510.63 419.58,558.13 417.80,557.25" fill="#808080" stroke="#808080" stroke-width="0.6" stroke-linejoin="miter" /><path d="M417.80 509.75L419.58 510.63M417.80 557.25L419.58 558.13M417.80 509.75L417.80 557.25M419.58 510.63L419.58 558.13" fill="none" stroke="#232323" stroke-width="1.2" stroke-linecap="square"/><polygon points="419.58,510.63 498.30,460.31 498.30,507.81 419.58,558.13" fill="#808080" stroke="#808080" stroke-width="0.6" stroke-linejoin="miter" /><path d="M419.58 510.63L498.30 460.31M419.58 558.13L498.30 507.81M419.58 510.63L419.58 558.13M498.30 460.31L498.30 507.81" fill="none" stroke="#232323" stroke-width="1.2" stroke-linecap="square"/><polygon points="494.08,547.39 495.86,548.27 495.86,595.77 494.08,594.89" fill="#808080" stroke="#808080" stroke-width="0.6" stroke-linejoin="miter" /><path d="M494.08 547.39L495.86 548.27M494.08 594.89L495.86 595.77M494.08 547.39L494.08 594.89M495.86 548.27L495.86 595.77" fill="none" stroke="#232323" stroke-width="1.2" stroke-linecap="square"/><polygon points="495.86,548.27 574.58,497.95 574.58,545.45 495.86,595.77" fill="#808080" stroke="#808080" stroke-width="0.6" stroke-linejoin="miter" /><path d="M495.86 548.27L574.58 497.95M495.86 595.77L574.58 545.45" fill="none" stroke="#232323" stroke-width="1.2" stroke-linecap="square"/><polygon points="415.81,511.02 493.88,549.54 493.88,597.04 415.81,558.52" fill="#808080" stroke="#808080" stroke-width="0.6" stroke-linejoin="miter" /><path d="M415.81 511.02L493.88 549.54M415.81 558.52L493.88 597.04M415.81 511.02L415.81 558.52M493.88 549.54L493.88 597.04" fill="none" stroke="#232323" stroke-width="1.2" stroke-linecap="square"/><polygon points="493.88,549.54 495.86,548.27 495.86,595.77 493.88,597.04" fill="#808080" stroke="#808080" stroke-width="0.6" stroke-linejoin="miter" /><path d="M493.88 549.54L495.86 548.27M493.88 597.04L495.86 595.77M493.88 549.54L493.88 597.04" fill="none" stroke="#232323" stroke-width="1.2" stroke-linecap="square"/><polygon points="645.63,470.10 647.41,470.98 647.41,518.48 645.63,517.60" fill="#808080" stroke="#808080" stroke-width="0.6" stroke-linejoin="miter" /><path d="M645.63 470.10L647.41 470.98M645.63 517.60L647.41 518.48M645.63 470.10L645.63 517.60M647.41 470.98L647.41 518.48" fill="none" stroke="#232323" stroke-width="1.2" stroke-linecap="square"/><polygon points="647.41,470.98 783.12,384.24 783.12,431.74 647.41,518.48" fill="#808080" stroke="#808080" stroke-width="0.6" stroke-linejoin="miter" /><path d="M647.41 470.98L783.12 384.24M647.41 518.48L783.12 431.74M647.41 470.98L647.41 518.48M783.12 384.24L783.12 431.74" fill="none" stroke="#232323" stroke-width="1.2" stroke-linecap="square"/><polygon points="494.92,566.44 496.70,567.32 496.70,614.82 494.92,613.94" fill="#808080" stroke="#808080" stroke-width="0.6" stroke-linejoin="miter" /><path d="M494.92 566.44L496.70 567.32M494.92 613.94L496.70 614.82M494.92 566.44L494.92 613.94M496.70 567.32L496.70 614.82" fill="none" stroke="#232323" stroke-width="1.2" stroke-linecap="square"/><polygon points="496.70,567.32 629.74,482.28 629.74,529.78 496.70,614.82" fill="#808080" stroke="#808080" stroke-width="0.6" stroke-linejoin="miter" /><path d="M496.70 567.32L629.74 482.28M496.70 614.82L629.74 529.78M496.70 567.32L496.70 614.82M629.74 482.28L629.74 529.78" fill="none" stroke="#232323" stroke-width="1.2" stroke-linecap="square"/><polygon points="733.78,415.78 779.94,438.56 779.94,486.06 733.78,463.28" fill="#808080" stroke="#808080" stroke-width="0.6" stroke-linejoin="miter" /><path d="M733.78 415.78L779.94 438.56M733.78 463.28L779.94 486.06M733.78 415.78L733.78 463.28M779.94 438.56L779.94 486.06" fill="none" stroke="#232323" stroke-width="1.2" stroke-linecap="square"/><polygon points="779.94,438.56 781.93,437.29 781.93,484.79 779.94,486.06" fill="#808080" stroke="#808080" stroke-width="0.6" stroke-linejoin="miter" /><path d="M779.94 438.56L781.93 437.29M779.94 486.06L781.93 484.79M779.94 438.56L779.94 486.06M781.93 437.29L781.93 484.79" fill="none" stroke="#232323" stroke-width="1.2" stroke-linecap="square"/><polygon points="686.73,445.85 732.90,468.63 732.90,516.13 686.73,493.35" fill="#808080" stroke="#808080" stroke-width="0.6" stroke-linejoin="miter" /><path d="M686.73 445.85L732.90 468.63M686.73 493.35L732.90 516.13M686.73 445.85L686.73 493.35M732.90 468.63L732.90 516.13" fill="none" stroke="#232323" stroke-width="1.2" stroke-linecap="square"/><polygon points="732.90,468.63 734.89,467.36 734.89,514.86 732.90,516.13" fill="#808080" stroke="#808080" stroke-width="0.6" stroke-linejoin="miter" /><path d="M732.90 468.63L734.89 467.36M732.90 516.13L734.89 514.86M732.90 468.63L732.90 516.13M734.89 467.36L734.89 514.86" fill="none" stroke="#232323" stroke-width="1.2" stroke-linecap="square"/><polygon points="645.42,472.26 691.59,495.04 691.59,542.54 645.42,519.76" fill="#808080" stroke="#808080" stroke-width="0.6" stroke-linejoin="miter" /><path d="M645.42 472.26L691.59 495.04M645.42 519.76L691.59 542.54M645.42 472.26L645.42 519.76M691.59 495.04L691.59 542.54" fill="none" stroke="#232323" stroke-width="1.2" stroke-linecap="square"/><polygon points="691.59,495.04 693.58,493.76 693.58,541.26 691.59,542.54" fill="#808080" stroke="#808080" stroke-width="0.6" stroke-linejoin="miter" /><path d="M691.59 495.04L693.58 493.76M691.59 542.54L693.58 541.26M691.59 495.04L691.59 542.54M693.58 493.76L693.58 541.26" fill="none" stroke="#232323" stroke-width="1.2" stroke-linecap="square"/><polygon points="629.74,482.28 675.90,505.06 675.90,552.56 629.74,529.78" fill="#808080" stroke="#808080" stroke-width="0.6" stroke-linejoin="miter" /><path d="M629.74 482.28L675.90 505.06M629.74 529.78L675.90 552.56M629.74 482.28L629.74 529.78M675.90 505.06L675.90 552.56" fill="none" stroke="#232323" stroke-width="1.2" stroke-linecap="square"/><polygon points="675.90,505.06 677.89,503.79 677.89,551.29 675.90,552.56" fill="#808080" stroke="#808080" stroke-width="0.6" stroke-linejoin="miter" /><path d="M675.90 505.06L677.89 503.79M675.90 552.56L677.89 551.29M675.90 505.06L675.90 552.56M677.89 503.79L677.89 551.29" fill="none" stroke="#232323" stroke-width="1.2" stroke-linecap="square"/><polygon points="580.78,513.58 626.94,536.36 626.94,583.86 580.78,561.08" fill="#808080" stroke="#808080" stroke-width="0.6" stroke-linejoin="miter" /><path d="M580.78 513.58L626.94 536.36M580.78 561.08L626.94 583.86M580.78 513.58L580.78 561.08M626.94 536.36L626.94 583.86" fill="none" stroke="#232323" stroke-width="1.2" stroke-linecap="square"/><polygon points="626.94,536.36 628.93,535.09 628.93,582.59 626.94,583.86" fill="#808080" stroke="#808080" stroke-width="0.6" stroke-linejoin="miter" /><path d="M626.94 536.36L628.93 535.09M626.94 583.86L628.93 582.59M626.94 536.36L626.94 583.86M628.93 535.09L628.93 582.59" fill="none" stroke="#232323" stroke-width="1.2" stroke-linecap="square"/><polygon points="532.58,544.38 578.75,567.16 578.75,614.66 532.58,591.88" fill="#808080" stroke="#808080" stroke-width="0.6" stroke-linejoin="miter" /><path d="M532.58 544.38L578.75 567.16M532.58 591.88L578.75 614.66M532.58 544.38L532.58 591.88M578.75 567.16L578.75 614.66" fill="none" stroke="#232323" stroke-width="1.2" stroke-linecap="square"/><polygon points="578.75,567.16 580.74,565.89 580.74,613.39 578.75,614.66" fill="#808080" stroke="#808080" stroke-width="0.6" stroke-linejoin="miter" /><path d="M578.75 567.16L580.74 565.89M578.75 614.66L580.74 613.39M578.75 567.16L578.75 614.66M580.74 565.89L580.74 613.39" fill="none" stroke="#232323" stroke-width="1.2" stroke-linecap="square"/><polygon points="399.36,521.54 540.88,591.37 540.88,638.87 399.36,569.04" fill="#808080" stroke="#808080" stroke-width="0.6" stroke-linejoin="miter" /><path d="M399.36 521.54L540.88 591.37M399.36 569.04L540.88 638.87M399.36 521.54L399.36 569.04M540.88 591.37L540.88 638.87" fill="none" stroke="#232323" stroke-width="1.2" stroke-linecap="square"/><polygon points="540.88,591.37 542.87,590.10 542.87,637.60 540.88,638.87" fill="#808080" stroke="#808080" stroke-width="0.6" stroke-linejoin="miter" /><path d="M540.88 591.37L542.87 590.10M540.88 638.87L542.87 637.60M540.88 591.37L540.88 638.87M542.87 590.10L542.87 637.60" fill="none" stroke="#232323" stroke-width="1.2" stroke-linecap="square"/><polygon points="357.36,548.38 359.15,549.26 359.15,596.76 357.36,595.88" fill="#808080" stroke="#808080" stroke-width="0.6" stroke-linejoin="miter" /><path d="M357.36 548.38L359.15 549.26M357.36 595.88L359.15 596.76M357.36 548.38L357.36 595.88M359.15 549.26L359.15 596.76" fill="none" stroke="#232323" stroke-width="1.2" stroke-linecap="square"/><polygon points="359.15,549.26 401.14,522.42 401.14,569.92 359.15,596.76" fill="#808080" stroke="#808080" stroke-width="0.6" stroke-linejoin="miter" /><path d="M359.15 549.26L401.14 522.42M359.15 596.76L401.14 569.92M359.15 549.26L359.15 596.76M401.14 522.42L401.14 569.92" fill="none" stroke="#232323" stroke-width="1.2" stroke-linecap="square"/><polygon points="433.37,585.89 435.15,586.77 435.15,634.27 433.37,633.39" fill="#808080" stroke="#808080" stroke-width="0.6" stroke-linejoin="miter" /><path d="M433.37 585.89L435.15 586.77M433.37 633.39L435.15 634.27M433.37 585.89L433.37 633.39M435.15 586.77L435.15 634.27" fill="none" stroke="#232323" stroke-width="1.2" stroke-linecap="square"/><polygon points="435.15,586.77 477.15,559.92 477.15,607.42 435.15,634.27" fill="#808080" stroke="#808080" stroke-width="0.6" stroke-linejoin="miter" /><path d="M435.15 586.77L477.15 559.92M435.15 634.27L477.15 607.42M435.15 586.77L435.15 634.27M477.15 559.92L477.15 607.42" fill="none" stroke="#232323" stroke-width="1.2" stroke-linecap="square"/><polygon points="224.40,485.20 498.80,620.60 498.80,668.10 224.40,532.70" fill="#808080" stroke="#232323" stroke-width="1.2" stroke-linejoin="miter" /><polygon points="498.80,620.60 881.30,376.10 881.30,423.60 498.80,668.10" fill="#808080" stroke="#232323" stroke-width="1.2" stroke-linejoin="miter" /><polyline points="523.74,472.28 539.04,479.83 590.23,447.03" fill="none" stroke="#232323" stroke-width="1.2"/><path d="M 224.40,485.20 498.80,620.60 881.30,376.10 606.90,240.70 Z M 228.60,484.85 606.82,243.08 877.10,376.45 498.88,618.22 Z" fill="#808080" stroke="#232323" stroke-width="1.2" fill-rule="evenodd"/><polygon points="511.57,303.97 622.50,358.70 624.49,357.43 513.56,302.69" fill="#808080" stroke="#232323" stroke-width="1.2" stroke-linejoin="miter" /><polygon points="505.33,395.68 507.12,396.56 558.37,363.80 556.59,362.92" fill="#808080" stroke="#232323" stroke-width="1.2" stroke-linejoin="miter" /><polygon points="556.38,365.07 588.07,380.71 590.06,379.43 558.37,363.80" fill="#808080" stroke="#232323" stroke-width="1.2" stroke-linejoin="miter" /><polygon points="529.61,382.18 561.30,397.82 563.29,396.55 531.60,380.91" fill="#808080" stroke="#232323" stroke-width="1.2" stroke-linejoin="miter" /><polygon points="538.81,412.20 540.59,413.08 719.53,298.70 717.74,297.82" fill="#808080" stroke="#232323" stroke-width="1.2" stroke-linejoin="miter" /><polygon points="425.89,358.73 538.60,414.35 540.59,413.08 427.88,357.46" fill="#808080" stroke="#232323" stroke-width="1.2" stroke-linejoin="miter" /><polygon points="410.21,368.76 523.74,424.78 525.73,423.51 412.20,367.49" fill="#808080" stroke="#232323" stroke-width="1.2" stroke-linejoin="miter" /><polygon points="447.85,432.73 449.63,433.61 489.72,407.99 487.93,407.11" fill="#808080" stroke="#232323" stroke-width="1.2" stroke-linejoin="miter" /><polygon points="445.86,434.00 479.89,450.79 481.87,449.52 447.85,432.73" fill="#808080" stroke="#232323" stroke-width="1.2" stroke-linejoin="miter" /><polygon points="325.68,422.79 437.43,477.93 439.42,476.66 327.67,421.52" fill="#808080" stroke="#232323" stroke-width="1.2" stroke-linejoin="miter" /><polygon points="340.35,539.99 342.13,540.87 523.74,424.78 521.96,423.90" fill="#808080" stroke="#232323" stroke-width="1.2" stroke-linejoin="miter" /><polygon points="689.75,335.91 691.54,336.79 737.36,307.50 735.58,306.62" fill="#808080" stroke="#232323" stroke-width="1.2" stroke-linejoin="miter" /><polygon points="765.49,373.28 767.27,374.16 813.10,344.87 811.31,343.99" fill="#808080" stroke="#232323" stroke-width="1.2" stroke-linejoin="miter" /><polygon points="687.77,337.18 829.29,407.02 831.28,405.74 689.75,335.91" fill="#808080" stroke="#232323" stroke-width="1.2" stroke-linejoin="miter" /><polygon points="671.32,347.70 749.38,386.22 751.37,384.95 673.31,346.43" fill="#808080" stroke="#232323" stroke-width="1.2" stroke-linejoin="miter" /><polygon points="592.22,398.26 594.00,399.14 673.10,348.58 671.32,347.70" fill="#808080" stroke="#232323" stroke-width="1.2" stroke-linejoin="miter" /><polygon points="668.50,435.90 670.28,436.78 749.38,386.22 747.60,385.34" fill="#808080" stroke="#232323" stroke-width="1.2" stroke-linejoin="miter" /><polygon points="590.23,399.53 668.29,438.05 670.28,436.78 592.22,398.26" fill="#808080" stroke="#232323" stroke-width="1.2" stroke-linejoin="miter" /><polygon points="496.52,459.43 574.58,497.95 576.57,496.68 498.50,458.16" fill="#808080" stroke="#232323" stroke-width="1.2" stroke-linejoin="miter" /><polygon points="417.80,509.75 419.58,510.63 498.30,460.31 496.52,459.43" fill="#808080" stroke="#232323" stroke-width="1.2" stroke-linejoin="miter" /><polygon points="494.08,547.39 495.86,548.27 574.58,497.95 572.80,497.07" fill="#808080" stroke="#232323" stroke-width="1.2" stroke-linejoin="miter" /><polygon points="415.81,511.02 493.88,549.54 495.86,548.27 417.80,509.75" fill="#808080" stroke="#232323" stroke-width="1.2" stroke-linejoin="miter" /><polygon points="645.63,470.10 647.41,470.98 783.12,384.24 781.34,383.36" fill="#808080" stroke="#232323" stroke-width="1.2" stroke-linejoin="miter" /><polygon points="494.92,566.44 496.70,567.32 629.74,482.28 627.95,481.40" fill="#808080" stroke="#232323" stroke-width="1.2" stroke-linejoin="miter" /><polygon points="733.78,415.78 779.94,438.56 781.93,437.29 735.77,414.50" fill="#808080" stroke="#232323" stroke-width="1.2" stroke-linejoin="miter" /><polygon points="686.73,445.85 732.90,468.63 734.89,467.36 688.72,444.58" fill="#808080" stroke="#232323" stroke-width="1.2" stroke-linejoin="miter" /><polygon points="645.42,472.26 691.59,495.04 693.58,493.76 647.41,470.98" fill="#808080" stroke="#232323" stroke-width="1.2" stroke-linejoin="miter" /><polygon points="629.74,482.28 675.90,505.06 677.89,503.79 631.73,481.01" fill="#808080" stroke="#232323" stroke-width="1.2" stroke-linejoin="miter" /><polygon points="580.78,513.58 626.94,536.36 628.93,535.09 582.77,512.30" fill="#808080" stroke="#232323" stroke-width="1.2" stroke-linejoin="miter" /><polygon points="532.58,544.38 578.75,567.16 580.74,565.89 534.57,543.11" fill="#808080" stroke="#232323" stroke-width="1.2" stroke-linejoin="miter" /><polygon points="399.36,521.54 540.88,591.37 542.87,590.10 401.35,520.27" fill="#808080" stroke="#232323" stroke-width="1.2" stroke-linejoin="miter" /><polygon points="357.36,548.38 359.15,549.26 401.14,522.42 399.36,521.54" fill="#808080" stroke="#232323" stroke-width="1.2" stroke-linejoin="miter" /><polygon points="433.37,585.89 435.15,586.77 477.15,559.92 475.37,559.04" fill="#808080" stroke="#232323" stroke-width="1.2" stroke-linejoin="miter" /><path d="M507.8,289.1 L306.1,417.2" fill="none" stroke="#262626" stroke-width="1.15" stroke-dasharray="17,6,6,6"/><path d="M507.8,289.1 L810.8,438.9" fill="none" stroke="#262626" stroke-width="1.15" stroke-dasharray="17,6,6,6" stroke-dashoffset="9"/><path d="M655.5,408 L665,413 M668.2,414.4 L684.2,422.8" fill="none" stroke="#262626" stroke-width="1.1"/><path d="M796,478.4 L797.4,479.1 M802.4,481.7 L810.8,486.2" fill="none" stroke="#262626" stroke-width="1.1"/></svg>
<!-- view control bar -->
<div class="a" style="left:44px;top:738px;width:1036px;height:13.5px;background:#f0f0f0"></div>
<div class="t" style="left:64.3px;top:740px;font-size:8px;color:#222">1 : 100</div>
<svg class="a" style="left:0;top:737px" width="340" height="15">
<rect x="104.5" y="2.5" width="11" height="8" fill="#fff" stroke="#333" stroke-width="1.2"/><rect x="107" y="5" width="6" height="3" fill="#777"/>
<path d="M121.5,5 L124,2.5 H132 V8.5 L129.5,11 H121.5 Z" fill="#7fc0f0" stroke="#1f6fd0" stroke-width="1"/><path d="M121.5,5 H129.5 V11 M129.5,5 L132,2.5" stroke="#1f6fd0" fill="none"/>
<circle cx="139" cy="5.5" r="2.8" fill="#f2c230" stroke="#c99a10" stroke-width=".6"/><path d="M141,7 L146,12 M146,7 L141,12" stroke="#e02020" stroke-width="1.3"/>
<circle cx="154" cy="5" r="2.6" fill="none" stroke="#1f5fa0" stroke-width="1"/><path d="M151,10.5 H156" stroke="#1f5fa0"/><path d="M157,7 L162,12 M162,7 L157,12" stroke="#e02020" stroke-width="1.3"/>
<path d="M166.5,5 L170,2.5 L174,5 L172,9 H168 Z" fill="none" stroke="#444" stroke-width=".9"/><circle cx="175" cy="8" r="2.2" fill="none" stroke="#2f86e0" stroke-width="1"/>
<path d="M184,6 H190 M186,3 V11" stroke="#2f86e0" stroke-width="1.3"/><path d="M189,7 L194,12 M194,7 L189,12" stroke="#e02020" stroke-width="1.3"/>
<path d="M198,6 H203 M201,3 V11" stroke="#2f86e0" stroke-width="1.3"/><circle cx="206" cy="6.5" r="2.4" fill="none" stroke="#2f86e0" stroke-width="1"/>
<path d="M213.5,6 L218,2.5 L223,6 V11 H213.5 Z" fill="#eee" stroke="#444" stroke-width="1"/><rect x="219" y="8" width="5" height="4" fill="#3aa050"/>
<path d="M228.5,6 Q231,9 234,6 T240,6" fill="none" stroke="#333" stroke-width="1"/><circle cx="237" cy="6" r="2.2" fill="none" stroke="#333" stroke-width=".9"/>
<path d="M250,3 a2.2,2.2 0 1,1 0.1,0 M250,7.5 V11" stroke="#2f86e0" stroke-width="1.2" fill="none"/>
<rect x="260.5" y="3.5" width="9" height="7" fill="none" stroke="#333" stroke-width="1.2" stroke-dasharray="2,1"/><path d="M266,5 L270,9" stroke="#333"/>
<path d="M275.5,6 L280,2.5 L285,6 V11 H275.5 Z" fill="#f0d0d0" stroke="#b03030" stroke-width="1"/><circle cx="284.5" cy="7" r="2.3" fill="none" stroke="#2f86e0" stroke-width="1"/>
<path d="M291.5,5 L295,2.5 H301 V9 L297,11.5 H291.5 Z" fill="#ddd" stroke="#555" stroke-width="1"/>
<path d="M305.5,3 H317 M305.5,5 V11 M309,11 H313 M313,7 L317,5 V11 H313 Z" stroke="#444" stroke-width="1" fill="none"/>
<path d="M329,3.5 L326,6.5 L329,9.5" stroke="#222" stroke-width="1.2" fill="none"/>
</svg>
<div class="a" style="left:699px;top:739px;width:12px;height:11px;background:#cccccc"></div>
<!-- status bar -->
<div class="a" style="left:0;top:751.5px;width:1080px;height:18px;background:#cfcfcf"></div>
<div class="t" style="left:-0.5px;top:756.5px;font-size:8.5px;color:#222">, CTRL adiciona, SHIFT cancela a seleção.</div>
<svg class="a" style="left:482px;top:755px" width="16" height="14"><path d="M2,4 L4,1.5 L6,4 V11 H2 Z M8,4 L10,1.5 L12,4 V11 H8 Z" fill="#aaa" stroke="#888" stroke-width=".8"/><path d="M1,7 H13" stroke="#888"/></svg>
<div class="a" style="left:502.5px;top:755.8px;width:150.5px;height:12.8px;background:#fff"></div>
<svg class="a" style="left:644px;top:759px" width="8" height="6"><path d="M1,1.5 L4,4.5 L7,1.5" stroke="#999" stroke-width="1" fill="none"/></svg>
<svg class="a" style="left:660px;top:756px" width="14" height="13"><path d="M3,11.5 L8,3 H12 L7,11.5 Z" fill="#bbb" stroke="#999" stroke-width=".8"/><path d="M2,4 H8" stroke="#aaa"/></svg>
<div class="t" style="left:674.5px;top:757px;font-size:9px;font-weight:bold;color:#222">:0</div>
<svg class="a" style="left:699px;top:756px" width="14" height="13"><rect x="1" y="1" width="11" height="10.5" fill="#fff" stroke="#333" stroke-width="1.3"/><path d="M1,3.8 H12 M4,6 V10 M6,7 H10.5 M6,9.3 H10.5" stroke="#333" stroke-width="1"/></svg>
<svg class="a" style="left:717px;top:756px" width="14" height="13"><rect x="1" y="1" width="11" height="11" fill="#aaa" stroke="#999" stroke-width=".6"/><path d="M4,10 L10,4" stroke="#ddd"/></svg>
<div class="a" style="left:736.5px;top:755.8px;width:151px;height:12.8px;background:#fff"></div>
<div class="t" style="left:738.5px;top:757px;font-size:9px;color:#8a8a8a">Modelo principal</div>
<svg class="a" style="left:878px;top:759px" width="8" height="6"><path d="M1,1.5 L4,4.5 L7,1.5" stroke="#999" stroke-width="1" fill="none"/></svg>
<svg class="a" style="left:1063px;top:756px" width="14" height="13"><path d="M1,3 Q4,0 7,3 Q10,0 13,3 L11,6 H3 Z" fill="#e8b830"/><path d="M8,4 L8,12 L10,10 L12,12.5" fill="#fff" stroke="#333" stroke-width=".8"/></svg>
<!-- taskbar -->
<div class="a" style="left:0;top:769.5px;width:1080px;height:30.5px;background:#efefef"></div>
<div class="a" style="left:0;top:769.5px;width:77.5px;height:30.5px;background:#fbfbfb"></div>
<svg class="a" style="left:0;top:770px" width="300" height="30">
<path d="M19,30 L27,22 H71 L78,30 Z" fill="#e6c9a8"/>
<path d="M24.5,6 l1,2.2 2.2,1 -2.2,1 -1,2.2 -1,-2.2 -2.2,-1 2.2,-1z" fill="#c060e0"/>
<path d="M29,15 L44,11 L48,22 L33,26 Z" fill="#f4f4f4" stroke="#bbb" stroke-width=".6"/>
<path d="M29,15 L33,26 L48,22 L48.5,24 L33,28.5 L28.5,17 Z" fill="#3f9a4a"/>
<path d="M36,14 L40,22" stroke="#ccc" stroke-width=".6"/>
<path d="M41,16 L48,8 L50,10 L43,18 Z" fill="#f2a030"/><path d="M48,8 L50,10 L51.5,6.5 Z" fill="#e04040"/>
<path d="M55.5,14 Q55.5,5 63,5 Q70.5,5 70.5,14 V23 Q70.5,27.5 66,27.5 H60 Q55.5,27.5 55.5,23 Z" fill="#2f7ee8"/>
<path d="M60,6 Q60,2.5 63,2.5 Q66,2.5 66,6" fill="none" stroke="#1a5ec0" stroke-width="1.3"/>
<path d="M57,20 Q63,17.5 69,20 V24 Q63,26 57,24 Z" fill="#5aa0f4"/>
<circle cx="73" cy="8" r="1.5" fill="#f4a020"/><circle cx="51" cy="17" r="1" fill="#50c0e0"/>
<g fill="none" stroke="#333" stroke-width="1.6"><path d="M90,9.5 H96.5 V19.5 H90 M90,9.5 V19.5"/></g><g fill="#333"><rect x="99" y="9" width="1.6" height="1.6"/><rect x="99" y="13.5" width="1.6" height="1.6"/><rect x="99" y="18" width="1.6" height="1.6"/></g>
<path d="M125,9 H131 L133,11 H141 V22 H125 Z" fill="#f4c542"/><path d="M125,13 H141 V22 H125 Z" fill="#ffd966"/>
<path d="M129,22 V17 H137 V22 H134.5 V19 H131.5 V22 Z" fill="#2f86e0"/>
<rect x="119" y="28" width="28" height="2" fill="#5a5a5a"/>
<circle cx="169.5" cy="14.5" r="9" fill="#db4437"/>
<path d="M169.5,14.5 L161.7,10 A9,9 0 0,0 165,22.3 Z" fill="#0f9d58"/><path d="M169.5,14.5 L165,22.3 A9,9 0 0,0 178.5,14.5 Z" fill="#f4b400"/>
<circle cx="169.5" cy="14.5" r="4.3" fill="#fff"/><circle cx="169.5" cy="14.5" r="3.3" fill="#4285f4"/>
<ellipse cx="206" cy="14.5" rx="7.8" ry="8.8" fill="#e0202a"/><ellipse cx="206" cy="14.5" rx="3.3" ry="6.5" fill="#f4f4f4"/>
<rect x="191" y="28" width="30" height="2" fill="#5a5a5a"/>
<path d="M241,6 L248,10 V19 L241,23 L234,19 V10 Z" fill="#f08a20" stroke="#c05a10" stroke-width=".8"/>
<path d="M244,10 H239 V14 H243 V18 H238" fill="none" stroke="#fff3d0" stroke-width="1.6"/>
<rect x="270.5" y="5.5" width="17" height="18" rx="1.5" fill="#1d5fd8"/><rect x="270.5" y="19.5" width="17" height="4" fill="#16409a"/>
<text x="275" y="17" font-family="Liberation Sans" font-weight="bold" font-size="10" fill="#fff">R</text>
<rect x="261" y="28" width="35" height="2" fill="#5a5a5a"/>
</svg>
<svg class="a" style="left:940px;top:773px" width="24" height="24">
<path d="M12,3 A8,8 0 1,1 4,14 A6,6 0 0,0 12,3 Z" fill="#f4a020"/>
<path d="M4,9 Q4,5 8,5 Q10,2 13,4 Q16,4 16,8 H4 Z" fill="#a8c8e8" stroke="#7aa0c8" stroke-width=".6"/>
<path d="M11,19 Q11,15 14,15 Q16,13 18,15 Q21,15 21,19 Z" fill="#a8c8e8" stroke="#7aa0c8" stroke-width=".6"/>
</svg>
<div class="t" style="left:967.5px;top:779px;font-size:10.2px;line-height:12px;color:#222">16°C</div>
<div class="t" style="left:995px;top:779.5px;font-size:10px;line-height:12px;color:#222">Parc. nublado</div>
<svg class="a" style="left:1073px;top:783px" width="10" height="8"><path d="M1,6 L5,2 L9,6" stroke="#222" stroke-width="1.1" fill="none"/></svg>

<svg class="a" style="left:960px;top:175px" width="120" height="95">
<defs>
<linearGradient id="cf" x1="0" y1="0" x2="0" y2="1"><stop offset="0" stop-color="#f6f6f6"/><stop offset="1" stop-color="#e2e2e2"/></linearGradient>
<radialGradient id="sh" cx=".5" cy=".5" r=".5"><stop offset="0" stop-color="#d8d8d8"/><stop offset="1" stop-color="#f6f6f6" stop-opacity="0"/></radialGradient>
</defs>
<ellipse cx="62.5" cy="58.9" rx="48" ry="26.9" fill="#f8f8f8" stroke="#cdcdcd" stroke-width="1"/>
<ellipse cx="62" cy="58.4" rx="36.9" ry="19" fill="#fdfdfd" stroke="#d2d2d2" stroke-width="1"/>
<ellipse cx="64" cy="56" rx="30" ry="12" fill="url(#sh)"/>
<path d="M36.5,22 L60.4,8.9 L87.7,20.2 L64,34.5 Z" fill="#f2f2f2" stroke="#9a9a9a" stroke-width="1"/>
<path d="M36.5,22 L64,34.5 V65.5 L38.3,50.6 Z" fill="url(#cf)" stroke="#9a9a9a" stroke-width="1"/>
<path d="M64,34.5 L87.7,20.2 L87,48.8 L64,65.5 Z" fill="#e4e4e4" stroke="#9a9a9a" stroke-width="1"/>
<text transform="translate(62,23.5) rotate(27)" font-family="Liberation Sans" font-size="5.2" fill="#777" text-anchor="middle">SUPERIOR</text>
<text transform="translate(50,46.5) rotate(28)" font-family="Liberation Sans" font-weight="bold" font-size="5.6" fill="#666" text-anchor="middle">FRONTAL</text>
<text transform="translate(76,46.5) rotate(-33)" font-family="Liberation Sans" font-weight="bold" font-size="5.2" fill="#777" text-anchor="middle">DIREITA</text>
<text transform="translate(28,40) rotate(-30)" font-family="Liberation Sans" font-size="7" fill="#aaa">O</text>
<text transform="translate(27,80) rotate(-30)" font-family="Liberation Sans" font-size="8" fill="#aaa">S</text>
<text transform="translate(92,75) rotate(30)" font-family="Liberation Sans" font-size="8" fill="#aaa">L</text>
</svg>
<div class="a" style="left:1062px;top:271px;width:24px;height:86px;background:#f7f7f7;border:1px solid #c4c4c4;border-radius:3px"></div>
<div class="a" style="left:1063px;top:314px;width:17px;height:1px;background:#cfcfcf"></div>
<svg class="a" style="left:1062px;top:271px" width="18" height="86">
<circle cx="13" cy="24" r="7" fill="none" stroke="#9a9a9a" stroke-width="1.2"/>
<circle cx="13" cy="24" r="4" fill="none" stroke="#9a9a9a" stroke-width="1.2"/>
<path d="M10,37 h4 l-2,2.5z" fill="#666"/>
<rect x="7" y="49" width="6" height="7" fill="#9fce7a" stroke="#6a9a50" stroke-width=".6"/>
<circle cx="14" cy="57" r="2.8" fill="none" stroke="#666" stroke-width="1"/>
<path d="M10,68 h4 l-2,2.5z" fill="#666"/>
</svg>
<!-- level symbol -->
<svg class="a" style="left:270px;top:410px" width="50" height="30">
<ellipse cx="14.2" cy="22.3" rx="3.9" ry="4.7" transform="rotate(35 14.2 22.3)" fill="#0b2fc4"/>
<path d="M12,20.5 L16.5,24 M16,20 L12.5,24.5 M11.8,22.5 L16.8,22" stroke="#e8f0ff" stroke-width=".9" fill="none"/>
<path d="M18,19.6 L33.7,9.6" stroke="#333" stroke-width=".9"/>
<text transform="translate(21,14.2) rotate(-32)" font-family="Liberation Sans" font-style="italic" font-size="4.8" fill="#555">Nível 2</text>
<text transform="translate(23.5,21.5) rotate(-32)" font-family="Liberation Sans" font-style="italic" font-size="4.6" fill="#666">4000</text>
</svg>

</body></html>
